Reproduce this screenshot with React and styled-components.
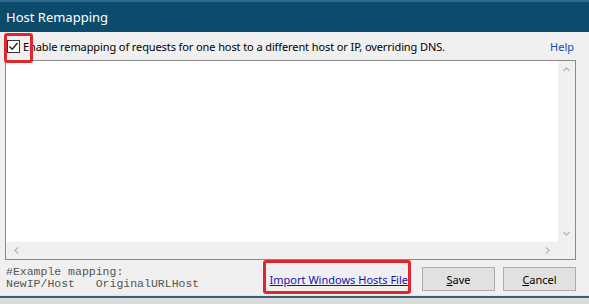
import React from "react";
import styled, { createGlobalStyle } from "styled-components";

const Global = createGlobalStyle`
  html, body { margin: 0; padding: 0; background: #d9dcdd; }
  body { font-family: "Noto Sans", "Open Sans", sans-serif; }
  * { box-sizing: border-box; }
`;

const Window = styled.div`
  width: 589px;
  height: 304px;
  display: flex;
  flex-direction: column;
  background: #d9dcdd;
`;

const TitleBar = styled.div`
  height: 32px;
  background: #0d4b6d;
  border-top: 2px solid #2a6a8c;
  color: #ffffff;
  font-size: 13px;
  display: flex;
  align-items: center;
  padding-left: 6px;
  padding-bottom: 1px;
`;

const Body = styled.div`
  height: 264px;
  background: #f0f0f0;
  border-bottom: 1px solid #f3dfe3;
  display: flex;
  flex-direction: column;
  padding: 0 13px 0 5px;
`;

const BottomLine = styled.div`
  height: 2px;
  background: #3f5d6b;
`;

const HeaderRow = styled.div`
  height: 28px;
  display: flex;
  align-items: center;
  position: relative;
  font-size: 11px;
  color: #000;
`;

const Highlight = styled.div`
  position: absolute;
  border: 3px solid #e0262b;
  border-radius: 3px;
  left: ${(p) => p.$l}px;
  top: ${(p) => p.$t}px;
  width: ${(p) => p.$w}px;
  height: ${(p) => p.$h}px;
  pointer-events: none;
`;

const Check = styled.div`
  width: 13px;
  height: 13px;
  border: 1px solid #333;
  background: #fff;
  margin-left: 2px;
  margin-right: 3px;
  display: flex;
  align-items: center;
  justify-content: center;
`;

const Label = styled.span`
  flex: 1;
  letter-spacing: -0.1px;
`;

const HelpLink = styled.span`
  color: #0b4fb3;
  font-size: 11px;
  margin-right: 2px;
`;

const Editor = styled.div`
  height: 200px;
  border: 1px solid #8a8a8a;
  background: #fff;
  display: grid;
  grid-template-columns: 1fr 17px;
  grid-template-rows: 1fr 17px;
`;

const Content = styled.div``;

const VScroll = styled.div`
  background: #f0f0f0;
  display: flex;
  flex-direction: column;
  justify-content: space-between;
  align-items: center;
  padding: 4px 0;
`;

const HScroll = styled.div`
  background: #f0f0f0;
  display: flex;
  justify-content: space-between;
  align-items: center;
  padding: 0 6px;
`;

const Corner = styled.div`
  background: #f0f0f0;
`;

const Footer = styled.div`
  flex: 1;
  display: flex;
  align-items: center;
  position: relative;
`;

const Example = styled.pre`
  margin: 0;
  font-family: "Liberation Mono", "DejaVu Sans Mono", monospace;
  font-size: 11.5px;
  line-height: 12px;
  color: #555;
  flex: 1;
  padding-left: 1px;
  padding-top: 1px;
`;

const ImportLink = styled.span`
  color: #1a0fb0;
  text-decoration: underline;
  font-size: 11px;
  margin-right: 14px;
  margin-top: 3px;
`;

const Button = styled.button`
  width: 73px;
  height: 24px;
  border: 1px solid #adadad;
  background: #e1e1e1;
  font-family: "Noto Sans", "Open Sans", sans-serif;
  font-size: 11px;
  color: #000;
  padding: 0;
  margin-left: ${(p) => p.$ml || 0}px;
  margin-top: 3px;
  u { text-decoration: underline; }
`;

const Arrow = ({ d }) => (
  <svg width="9" height="9" viewBox="0 0 9 9">
    <path d={d} fill="none" stroke="#b8b8b8" strokeWidth="1.3" />
  </svg>
);

export default function App() {
  return (
    <Window>
      <Global />
      <TitleBar>Host Remapping</TitleBar>
      <Body>
        <HeaderRow>
          <Check>
            <svg width="11" height="11" viewBox="0 0 11 11">
              <path d="M1.5 5.5 L4.2 8.3 L9.5 2" fill="none" stroke="#222" strokeWidth="1.4" />
            </svg>
          </Check>
          <Label>Enable remapping of requests for one host to a different host or IP, overriding DNS.</Label>
          <HelpLink>Help</HelpLink>
          <Highlight $l={-1} $t={1} $w={29} $h={30} />
        </HeaderRow>
        <Editor>
          <Content />
          <VScroll>
            <Arrow d="M1.5 6 L4.5 3 L7.5 6" />
            <Arrow d="M1.5 3 L4.5 6 L7.5 3" />
          </VScroll>
          <HScroll>
            <Arrow d="M6 1.5 L3 4.5 L6 7.5" />
            <Arrow d="M3 1.5 L6 4.5 L3 7.5" />
          </HScroll>
          <Corner />
        </Editor>
        <Footer>
          <Example>{"#Example mapping:\nNewIP/Host   OriginalURLHost"}</Example>
          <ImportLink>Import Windows Hosts File</ImportLink>
          <Button>
            <u>S</u>ave
          </Button>
          <Button $ml={8}>
            <u>C</u>ancel
          </Button>
          <Highlight $l={258} $t={0} $w={148} $h={34} />
        </Footer>
      </Body>
      <BottomLine />
    </Window>
  );
}
